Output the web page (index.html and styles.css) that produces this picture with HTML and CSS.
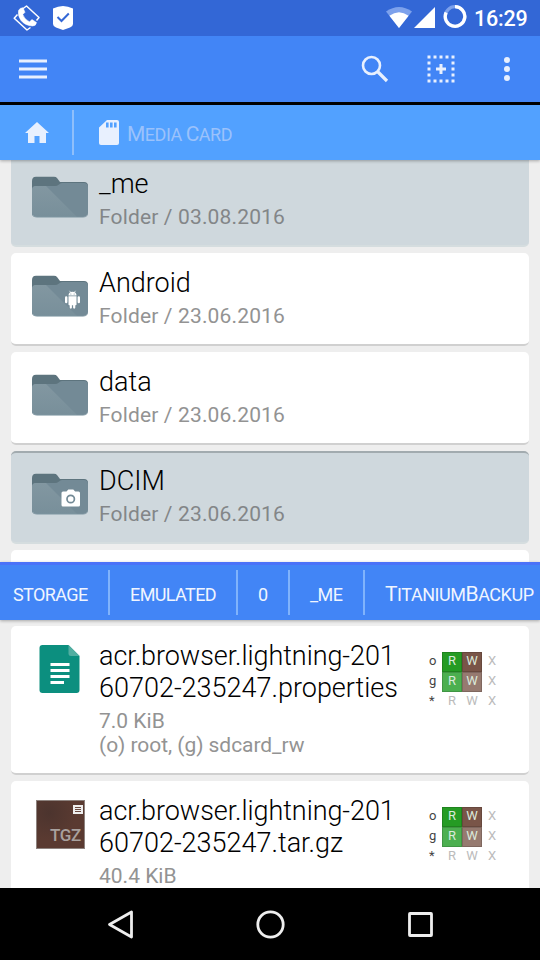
FILE: index.html
```html
<!DOCTYPE html>
<html lang="en">
<head>
<meta charset="utf-8">
<title>File manager</title>
<link rel="stylesheet" href="styles.css">
</head>
<body>
<svg width="0" height="0" class="defs">
  <defs>
    <linearGradient id="fg" x1="0" y1="0" x2="0" y2="1">
      <stop offset="0" stop-color="#8297a1"/><stop offset="1" stop-color="#788f9a"/>
    </linearGradient>
    <symbol id="folder" viewBox="0 0 56 42">
      <path d="M0 5Q0 .7 4 .7H22Q24 .7 25 2L28 6H52Q56 6 56 10V20H0Z" fill="#5d747e"/>
      <path d="M0 14Q0 10 4 10H23Q25 10 27 8.500Q28 7 30 7H52Q56 7 56 11V37Q56 41 52 41H4Q0 41 0 37Z" fill="#738a96"/>
      <path d="M0 14Q0 10 4 10H14L45 41H4Q0 41 0 37Z" fill="url(#fg)"/>
      <path d="M1 39Q2 41.300 5 41.300H51Q54 41.300 55 39" fill="none" stroke="#8ea3ad" stroke-width=".8"/>
    </symbol>
  </defs>
</svg>
<div class="screen">
  <header class="status">
    <svg class="s-call" width="28" height="26" viewBox="0 0 28 26" fill="none" stroke="#fff" stroke-width="1.500" stroke-linejoin="round">
      <path d="M4.500 9.500L1.200 13.200 14 25l3.500-2.500M9.500 4L13.500 1 26 12.500l-2.500 3"/>
      <path d="M5.500 5.500Q7 2.500 10 2.800L12 7.300 9.800 9.500Q11.500 14.500 16.500 16.800L19 14.500 23.500 17.500Q23 21 19.500 21 12 20.500 8 15.500 4.500 10.500 5.500 5.500Z" fill="#fff" stroke-width=".5"/>
    </svg>
    <svg class="s-shield" width="20" height="24" viewBox="0 0 20 24"><path d="M0 2.500Q5 0 10 0t10 2.500V18Q20 20 17 21.500L10 24 3 21.500Q0 20 0 18Z" fill="#fff"/><path d="M4.500 11l4 4 7.300-7.500" fill="none" stroke="#3367d6" stroke-width="2"/></svg>
    <span class="grow"></span>
    <svg class="s-wifi" width="26" height="21" viewBox="0 0 26 21"><path d="M0 4.500Q13-4.500 26 4.500L13 21Z" fill="#7da1ec"/><path d="M3.400 8.800Q13 1.800 22.600 8.800L13 21Z" fill="#fff"/></svg>
    <svg class="s-sig" width="21" height="21" viewBox="0 0 21 21"><path d="M21 0V21H0Z" fill="#fff"/></svg>
    <svg class="s-bat" width="24" height="24" viewBox="0 0 24 24" fill="none" stroke-width="3.300"><circle cx="12" cy="12.500" r="9.800" stroke="#7da1ec"/><path d="M12 2.700A9.800 9.800 0 1 1 3.100 8.500" stroke="#fff"/></svg>
    <span class="clock">16:29</span>
  </header>

  <div class="toolbar">
    <svg class="t-menu" width="28" height="20" viewBox="0 0 28 20"><path d="M0 2H28M0 10H28M0 18H28" stroke="#e8f0fe" stroke-width="3"/></svg>
    <span class="grow"></span>
    <svg class="t-search" width="28" height="28" viewBox="0 0 28 28" fill="none" stroke="#e8f0fe"><circle cx="10.500" cy="10.500" r="8.500" stroke-width="2.600"/><path d="M16.500 16.500L26 26" stroke-width="3.200"/></svg>
    <svg class="t-select" width="28" height="28" viewBox="0 0 28 28" fill="none" stroke="#e8f0fe" stroke-width="3">
      <path d="M.5 2H27.500M.5 26H27.500M2 .5V27.500M26 .5V27.500" stroke-dasharray="3 3"/><path d="M9 14H19M14 9V19"/>
    </svg>
    <svg class="t-more" width="6" height="26" viewBox="0 0 6 26" fill="#e8f0fe"><circle cx="3" cy="4" r="3"/><circle cx="3" cy="13" r="3"/><circle cx="3" cy="22" r="3"/></svg>
  </div>

  <nav class="crumbs top">
    <svg class="home" width="24" height="21" viewBox="0 0 24 21"><path d="M12 0L24 11H21V21H14.500V14H9.500V21H3V11H0Z" fill="#e8f0fe"/></svg>
    <i class="sep"></i>
    <svg class="sd" width="20" height="25" viewBox="0 0 20 25"><path d="M8 0H18Q20 0 20 2V23Q20 25 18 25H2Q0 25 0 23V7.500Z" fill="#e8f0fe"/><path d="M8.300 2.500V7.500M12.300 2.500V7.500M16.300 2.500V7.500" stroke="#52a1ff" stroke-width="2.600"/></svg>
    <span class="caps muted"><span class="big">M</span>EDIA <span class="big">C</span>ARD</span>
  </nav>

  <main class="pane upper">
    <div class="card sel first"><svg class="folder"><use href="#folder"/></svg><div class="txt"><div class="name">_me</div><div class="sub">Folder / 03.08.2016</div></div></div>
    <div class="card"><svg class="folder" viewBox="0 0 56 42"><use href="#folder" width="56" height="42"/>
      <g fill="#fff"><path d="M36.500 20.500a4 3.800 0 0 1 8 0ZM36.500 21.300h8v8.200q0 .8-.8.800h-6.400q-.8 0-.8-.8Z"/><rect x="33" y="21.300" width="2.400" height="7" rx="1.200"/><rect x="45.600" y="21.300" width="2.400" height="7" rx="1.200"/><rect x="37.700" y="29" width="2.200" height="4.700" rx="1.100"/><rect x="41.100" y="29" width="2.200" height="4.700" rx="1.100"/><path d="M37.500 15.800l1.300 1.800M43.500 15.800l-1.300 1.800" stroke="#fff" stroke-width=".7"/></g><circle cx="38.900" cy="18.900" r=".5" fill="#738a96"/><circle cx="42.100" cy="18.900" r=".5" fill="#738a96"/></svg><div class="txt"><div class="name">Android</div><div class="sub">Folder / 23.06.2016</div></div></div>
    <div class="card"><svg class="folder"><use href="#folder"/></svg><div class="txt"><div class="name">data</div><div class="sub">Folder / 23.06.2016</div></div></div>
    <div class="card sel edge"><svg class="folder" viewBox="0 0 56 42"><use href="#folder" width="56" height="42"/>
      <path d="M31 18.500h3.500l1.800-2h5l1.800 2h3.400q1.500 0 1.500 1.500v12q0 1.500-1.500 1.500H31q-1.500 0-1.500-1.500V20q0-1.500 1.500-1.500Z" fill="#fff"/><circle cx="38.700" cy="26" r="3.700" fill="none" stroke="#738a96" stroke-width="1.700"/></svg><div class="txt"><div class="name">DCIM</div><div class="sub">Folder / 23.06.2016</div></div></div>
    <div class="card"></div>
  </main>

  <nav class="crumbs path">
    <span class="caps c1">STORAGE</span><i class="sep"></i>
    <span class="caps c2">EMULATED</span><i class="sep"></i>
    <span class="caps c3">0</span><i class="sep"></i>
    <span class="caps c4">_ME</span><i class="sep"></i>
    <span class="caps c5"><span class="big">T</span>ITANIUM<span class="big">B</span>ACKUP</span>
  </nav>

  <main class="pane lower">
    <div class="card file">
      <svg class="doc" width="41" height="48" viewBox="0 0 41 48"><path d="M3.500 0H29.500L40.500 11V45Q40.500 48 37.500 48H3.500Q.5 48 .5 45V3Q.5 0 3.500 0Z" fill="#0c8f7f"/><path d="M29.500 0V8.500Q29.500 11 32 11H40.500Z" fill="#52aea1"/><path d="M11.500 19.500H30.500M11.500 25.500H30.500M11.500 31.500H30.500M11.500 37.500H25" stroke="#fff" stroke-width="3"/></svg>
      <div class="txt"><div class="name"><span class="tight">acr.browser.lightning-201</span><br>60702-235247.properties</div><div class="sub">7.0 KiB<br><span class="own">(o) root, (g) sdcard_rw</span></div></div>
      <div class="perm"><b>o</b><span class="r1">R</span><span class="w1">W</span><span>X</span><b>g</b><span class="r2">R</span><span class="w2">W</span><span>X</span><b>*</b><span>R</span><span>W</span><span>X</span></div>
    </div>
    <div class="card file">
      <div class="tgz"><svg width="10" height="9" viewBox="0 0 10 9"><path d="M0 0H10V9H0Z" fill="#eee"/><path d="M2 2.500H8M2 4.500H8M2 6.500H8" stroke="#6b4a41"/></svg><span>TGZ</span></div>
      <div class="txt"><div class="name"><span class="tight">acr.browser.lightning-201</span><br>60702-235247.tar.gz</div><div class="sub">40.4 KiB</div></div>
      <div class="perm"><b>o</b><span class="r1">R</span><span class="w1">W</span><span>X</span><b>g</b><span class="r2">R</span><span class="w2">W</span><span>X</span><b>*</b><span>R</span><span>W</span><span>X</span></div>
    </div>
  </main>

  <footer class="navbar">
    <svg width="30" height="30" viewBox="0 0 30 30"><path d="M4.500 15.500L26.500 3V28Z"/></svg>
    <svg width="30" height="30" viewBox="0 0 30 30"><circle cx="15.500" cy="15.500" r="12.700"/></svg>
    <svg width="30" height="30" viewBox="0 0 30 30"><rect x="4.500" y="4.500" width="22" height="22" rx=".5"/></svg>
  </footer>
</div>
</body>
</html>
```
FILE: styles.css
```css
* { box-sizing: border-box; }
body { margin: 0; font-family: Roboto, "Liberation Sans", sans-serif; }
svg { display: block; flex: none; }
.defs { position: absolute; }
.screen { width: 540px; height: 960px; overflow: hidden; display: flex; flex-direction: column; background: #eee; }
.grow { flex: 1; }

.status { height: 36px; flex: none; display: flex; background: #3367d6; padding: 0 12px 0 13px; }
.s-call { margin-top: 5px; }
.s-shield { margin: 6px 0 0 12px; }
.s-wifi { margin-top: 7px; }
.s-sig { margin: 7px 0 0 2px; }
.s-bat { margin: 4px 0 0 8px; }
.clock { width: 54px; margin-left: 7px; font-size: 21.500px; letter-spacing: -.2px; line-height: 38px; color: #fff; font-weight: 500; white-space: nowrap; }

.toolbar { height: 69px; flex: none; display: flex; align-items: center; background: #4285f6; border-bottom: 3px solid #000; padding: 0 30px 0 19px; }
.t-search { margin-right: 38px; }
.t-select { margin-right: 49px; }

.crumbs { flex: none; display: flex; align-items: center; color: #f0f5ff; white-space: nowrap; position: relative; }
.top { height: 55px; background: #52a1ff; box-shadow: 0 1px 3px rgba(0,0,0,.3); padding-left: 25px; }
.home { margin-right: 23px; }
.sd { margin: 0 8px 0 25px; }
.sep { width: 2px; height: 45px; background: #80b3fc; flex: none; }
.top .sep { background: #8fbffb; }
.caps { font-size: 18px; letter-spacing: -.6px; line-height: 24px; }
.big { font-size: 21px; }
.muted { color: #9bc2fb; padding-top: 4px; letter-spacing: -.5px; }
.path { height: 58px; background: #4285f6; border-top: 3px solid #4a72f8; box-shadow: 0 1px 3px rgba(0,0,0,.3); padding-left: 13px; }
.path .caps { padding-top: 4px; }
.c1 { width: 95px; }
.c2 { width: 126px; padding-left: 20px; }
.c3 { width: 50px; padding-left: 20px; }
.c4 { width: 73px; padding-left: 20px; }
.c5 { padding-left: 20px; letter-spacing: -.45px; }

.pane { padding: 0 11px; display: flex; flex-direction: column; gap: 6px; overflow: hidden; }
.upper { height: 402px; flex: none; }
.lower { height: 268px; flex: none; padding-top: 6px; }
.card { flex: none; height: 93px; background: #fff; border-radius: 5px; border-bottom: 2px solid #d0d0d0; display: flex; padding: 14px 0 0 21px; }
.first { margin-top: -6px; }
.sel { background: #cfd8dd; border-bottom-color: #d5dddf; }
.edge { border-top: 2px solid #a2abaf; padding-top: 12px; }
.folder { width: 56px; height: 42px; margin: 8px 11px 0 0; }
.file { height: 149px; }
.name { font-size: 27px; font-weight: 300; line-height: 32px; color: #000; white-space: nowrap; }
.tight { letter-spacing: -.06px; }
.sub { margin-top: 5px; font-size: 21px; letter-spacing: .15px; line-height: 24px; color: #939393; white-space: nowrap; }
.file .sub { letter-spacing: 0; }
.sel .sub { color: #838688; }
.file .own { letter-spacing: -.05px; }
.doc { margin: 5px 19px 0 7px; }
.txt { flex: none; width: 328px; }

.tgz { width: 49px; height: 49px; margin: 5px 14px 0 4px; padding: 4px 1px 0 0; background: radial-gradient(circle at 25% 25%, #4c342e 0, #5a3a31 55%); border: 1px solid #8d827e; display: flex; flex-direction: column; align-items: flex-end; flex: none; }
.tgz span { font-size: 17px; letter-spacing: -.3px; line-height: 20px; margin: 11px 2px 0 0; color: #a9a19e; font-weight: 500; }

.perm { display: grid; grid-template-columns: 15px 20px 20px 20px; grid-auto-rows: 20px; margin-top: 12px; font-size: 13px; line-height: 18px; color: #bbb; text-align: center; height: 60px; }
.perm b { font-weight: 400; color: #444; text-align: left; padding-left: 2px; }
.perm .r1, .perm .r2, .perm .w1, .perm .w2 { color: #dceadc; box-shadow: inset 0 0 0 1px rgba(0,0,0,.15); }
.r1 { background: #259b24; }
.r2 { background: #4caf50; }
.w1 { background: #795548; }
.w2 { background: #967a70; }

.navbar { flex: none; height: 72px; background: #000; display: flex; justify-content: center; gap: 120px; padding-top: 21px; }
.navbar svg { fill: none; stroke: #eee; stroke-width: 2.800; stroke-linejoin: round; }
```
